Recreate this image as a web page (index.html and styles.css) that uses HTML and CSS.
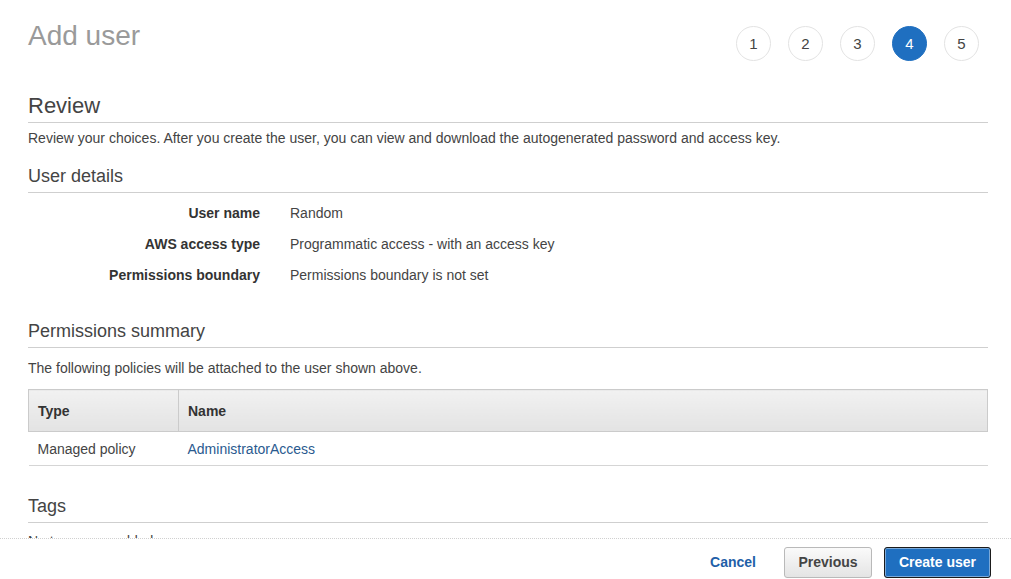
FILE: index.html
```html
<!DOCTYPE html>
<html>
<head>
<meta charset="utf-8">
<link rel="stylesheet" href="styles.css">
</head>
<body>
<div class="page">
  <div class="top">
    <h1 class="title">Add user</h1>
    <div class="steps">
      <span class="step">1</span>
      <span class="step">2</span>
      <span class="step">3</span>
      <span class="step active">4</span>
      <span class="step">5</span>
    </div>
  </div>

  <h2 class="h-review">Review</h2>
  <p class="desc">Review your choices. After you create the user, you can view and download the autogenerated password and access key.</p>

  <h3 class="h-sec">User details</h3>
  <div class="details">
    <div class="lbl">User name</div><div class="val">Random</div>
    <div class="lbl">AWS access type</div><div class="val">Programmatic access - with an access key</div>
    <div class="lbl">Permissions boundary</div><div class="val">Permissions boundary is not set</div>
  </div>

  <h3 class="h-sec h-perm">Permissions summary</h3>
  <p class="desc2">The following policies will be attached to the user shown above.</p>
  <table class="tbl">
    <thead>
      <tr><th class="c1">Type</th><th>Name</th></tr>
    </thead>
    <tbody>
      <tr><td class="c1">Managed policy</td><td><a class="link">AdministratorAccess</a></td></tr>
    </tbody>
  </table>

  <h3 class="h-sec h-tags">Tags</h3>
  <p class="desc3">No tags were added.</p>
</div>

<div class="footer">
  <a class="cancel">Cancel</a>
  <button class="btn prev">Previous</button>
  <button class="btn create">Create user</button>
</div>
</body>
</html>
```

FILE: styles.css
```css
* { box-sizing: border-box; }
html, body { margin: 0; padding: 0; background: #fff; }
body {
  font-family: "Liberation Sans", Arial, sans-serif;
  color: #444;
  font-size: 14px;
  width: 1011px;
  height: 579px;
  overflow: hidden;
}
.page {
  padding: 0 23px 0 28px;
  width: 1011px;
}
.top {
  display: flex;
  justify-content: space-between;
  align-items: flex-start;
  height: 93px;
}
.title {
  margin: 19px 0 0 0;
  font-size: 28px;
  line-height: 34px;
  font-weight: normal;
  color: #9a9a9a;
}
.steps {
  display: flex;
  gap: 17px;
  margin-top: 26px;
  margin-right: 9px;
}
.step {
  width: 35px;
  height: 35px;
  border-radius: 50%;
  border: 1px solid #e3e3e3;
  display: flex;
  align-items: center;
  justify-content: center;
  font-size: 15px;
  color: #444;
  background: #fff;
}
.step.active {
  background: #1f6fc0;
  border-color: #1f6fc0;
  color: #fff;
}
.h-review {
  margin: 0;
  font-size: 22px;
  line-height: 26px;
  font-weight: normal;
  color: #444;
  padding-bottom: 3px;
  border-bottom: 1px solid #cfcfcf;
}
.desc {
  margin: 6px 0 0 0;
  line-height: 18px;
}
.h-sec {
  margin: 18px 0 0 0;
  font-size: 18px;
  line-height: 22px;
  font-weight: normal;
  color: #444;
  padding-bottom: 5px;
  border-bottom: 1px solid #cfcfcf;
}
.details {
  display: grid;
  grid-template-columns: 232px 1fr;
  column-gap: 30px;
  row-gap: 13px;
  margin-top: 11px;
  line-height: 18px;
}
.lbl {
  text-align: right;
  font-weight: bold;
  color: #333;
}
.val { color: #444; }
.h-perm { margin-top: 36px; }
.desc2 {
  margin: 11px 0 0 0;
  line-height: 18px;
}
.tbl {
  margin-top: 12px;
  width: 960px;
  border-collapse: collapse;
}
.tbl th {
  text-align: left;
  font-weight: bold;
  color: #333;
  height: 42px;
  padding: 0 9px;
  background: linear-gradient(#f1f1f1, #e3e3e3);
  border: 1px solid #cbcbcb;
}
.tbl th.c1, .tbl td.c1 { width: 150px; }
.tbl td {
  height: 34px;
  padding: 0 9px;
  border-bottom: 1px solid #d5d5d5;
  color: #444;
}
.link { color: #2a5a8f; text-decoration: none; }
.h-tags { margin-top: 29px; }
.desc3 {
  margin: 9px 0 0 0;
  line-height: 18px;
}
.footer {
  position: fixed;
  left: 0;
  right: 0;
  bottom: 0;
  height: 41px;
  background: #fff;
  border-top: 1px dotted #d0d0d0;
  display: flex;
  justify-content: flex-end;
  align-items: center;
  padding: 6px 20px 0 0;
}
.cancel {
  font-weight: bold;
  color: #1f5fa8;
  margin-right: 28px;
  font-size: 14px;
}
.btn {
  font-family: "Liberation Sans", Arial, sans-serif;
  font-weight: bold;
  font-size: 14px;
  height: 31px;
  border-radius: 3px;
  cursor: pointer;
}
.prev {
  width: 88px;
  color: #444;
  background: linear-gradient(#fafafa, #e4e4e4);
  border: 1px solid #b9b9b9;
  margin-right: 12px;
}
.create {
  width: 107px;
  color: #fff;
  background: #1f6fc0;
  border: 1px solid #1b1b1b;
  box-shadow: inset 0 0 0 1px #7aa9d9;
}
```
